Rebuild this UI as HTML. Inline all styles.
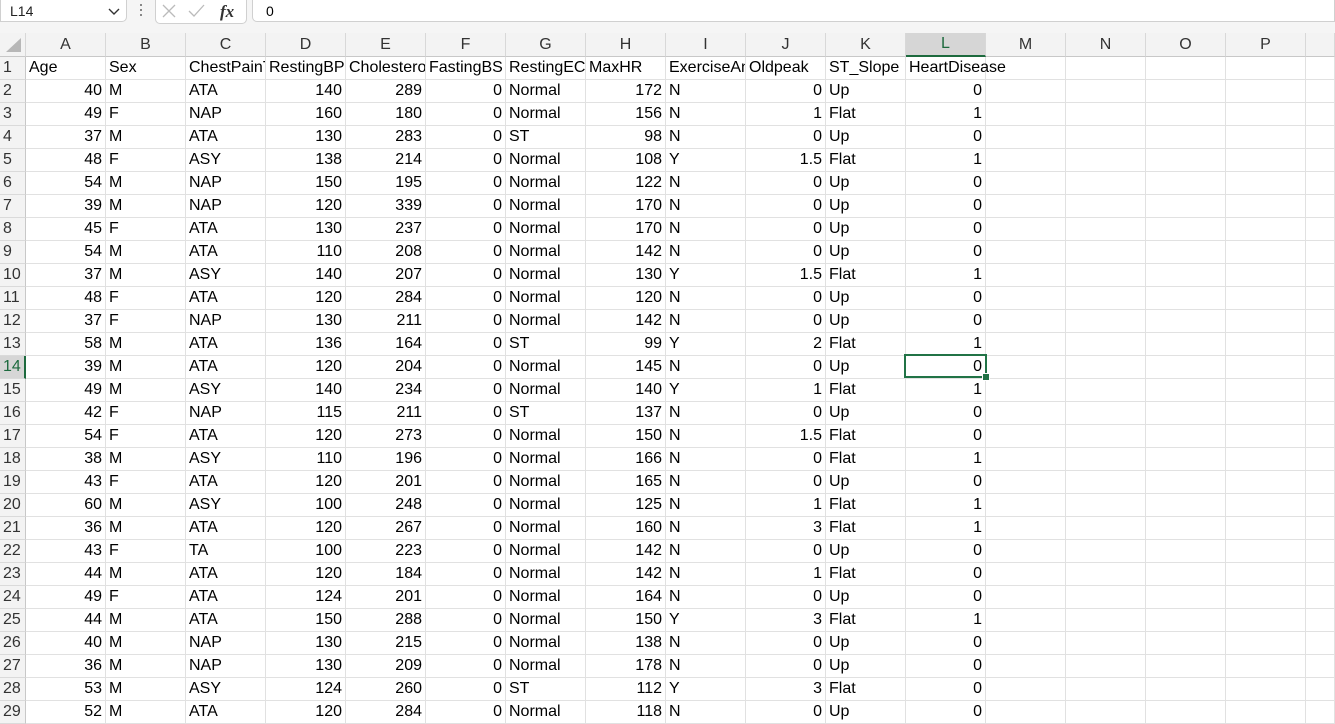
<!DOCTYPE html>
<html><head><meta charset="utf-8"><style>
body{margin:0;width:1335px;height:724px;overflow:hidden;background:#fff;font-family:"Liberation Sans",Arial,sans-serif;position:relative}
.top{position:absolute;left:0;top:0;width:1335px;height:33px;background:#f5f5f5}
.nb{position:absolute;left:0;top:-1px;width:127px;height:23px;background:#fff;border:1px solid #d0d0d0;border-radius:0 0 5px 0;font-size:14px;line-height:23px;padding-left:9px;box-sizing:border-box;color:#222}
.fx{position:absolute;left:155px;top:-1px;width:90px;height:23px;background:#fff;border:1px solid #d0d0d0;border-radius:0 0 5px 5px}
.fb{position:absolute;left:252px;top:-1px;width:1083px;height:23px;background:#fff;border:1px solid #d0d0d0;border-radius:0 0 0 5px;font-size:14px;line-height:22px;padding-left:13px;box-sizing:border-box}
table{position:absolute;left:0;top:33px;width:1335px;border-collapse:separate;border-spacing:0;table-layout:fixed;font-size:16px}
td{height:22px;border-right:1px solid #e1e1e1;border-bottom:1px solid #e1e1e1;padding:0 3px;white-space:nowrap;overflow:hidden;line-height:22px;color:#000;box-sizing:content-box}
td.r{text-align:right}
tr td:first-child{background:#f3f3f3;border-right:1px solid #c8c8c8;border-bottom:1px solid #dadada;padding:0 0 0 3px;color:#333;text-align:left}
tr.h td{background:#f3f3f3;text-align:center;color:#333;border-bottom:1px solid #c8c8c8;border-right:1px solid #d8d8d8}
tr.h td.sel{background:#d6d6d6;color:#1d6a3e;border-bottom:2px solid #1d6a3e;height:21px}
td.rs{background:#d6d6d6!important;color:#1d6a3e!important;border-right:2px solid #1d6a3e!important}
td.ov{overflow:visible;position:relative;z-index:2}
.selbox{position:absolute;left:904px;top:354px;width:79px;height:20px;border:2px solid #217346;z-index:3}
.handle{position:absolute;left:982px;top:373px;width:6px;height:6px;background:#217346;border:1px solid #fff;z-index:4}
</style></head><body>
<div class="top">
<div class="nb">L14<svg style="position:absolute;right:6px;top:8px" width="12" height="8"><path d="M1 1 L6 6 L11 1" fill="none" stroke="#333" stroke-width="1.4"/></svg></div>
<div style="position:absolute;left:140px;top:4px;width:2px;height:2px;background:#888;box-shadow:0 5px #888,0 10px #888"></div>
<div class="fx"><svg width="90" height="23"><path d="M7 5 L19 17 M19 5 L7 17" stroke="#bbb" stroke-width="1.3"/><path d="M33 11 L38 16 L48 5" fill="none" stroke="#bbb" stroke-width="1.3"/><text x="64" y="17" font-family="Liberation Serif" font-style="italic" font-weight="bold" font-size="17" fill="#333">fx</text></svg></div>
<div class="fb">0</div>
</div>
<table>
<colgroup><col style="width:26px"><col style="width:80px"><col style="width:80px"><col style="width:80px"><col style="width:80px"><col style="width:80px"><col style="width:80px"><col style="width:80px"><col style="width:80px"><col style="width:80px"><col style="width:80px"><col style="width:80px"><col style="width:80px"><col style="width:80px"><col style="width:80px"><col style="width:80px"><col style="width:80px"><col style="width:29px"></colgroup>
<tr class="h"><td style="background:#f3f3f3;padding:0"><svg style="display:block" width="26" height="22"><path d="M6 18 L21 18 L21 4 Z" fill="#b7b7b7"/></svg></td><td>A</td><td>B</td><td>C</td><td>D</td><td>E</td><td>F</td><td>G</td><td>H</td><td>I</td><td>J</td><td>K</td><td class="sel">L</td><td>M</td><td>N</td><td>O</td><td>P</td><td></td></tr>
<tr><td>1</td><td>Age</td><td>Sex</td><td>ChestPainType</td><td>RestingBP</td><td>Cholesterol</td><td>FastingBS</td><td>RestingECG</td><td>MaxHR</td><td>ExerciseAngina</td><td>Oldpeak</td><td>ST_Slope</td><td class="ov">HeartDisease</td><td></td><td></td><td></td><td></td><td></td></tr>
<tr><td>2</td><td class="r">40</td><td>M</td><td>ATA</td><td class="r">140</td><td class="r">289</td><td class="r">0</td><td>Normal</td><td class="r">172</td><td>N</td><td class="r">0</td><td>Up</td><td class="r">0</td><td></td><td></td><td></td><td></td><td></td></tr>
<tr><td>3</td><td class="r">49</td><td>F</td><td>NAP</td><td class="r">160</td><td class="r">180</td><td class="r">0</td><td>Normal</td><td class="r">156</td><td>N</td><td class="r">1</td><td>Flat</td><td class="r">1</td><td></td><td></td><td></td><td></td><td></td></tr>
<tr><td>4</td><td class="r">37</td><td>M</td><td>ATA</td><td class="r">130</td><td class="r">283</td><td class="r">0</td><td>ST</td><td class="r">98</td><td>N</td><td class="r">0</td><td>Up</td><td class="r">0</td><td></td><td></td><td></td><td></td><td></td></tr>
<tr><td>5</td><td class="r">48</td><td>F</td><td>ASY</td><td class="r">138</td><td class="r">214</td><td class="r">0</td><td>Normal</td><td class="r">108</td><td>Y</td><td class="r">1.5</td><td>Flat</td><td class="r">1</td><td></td><td></td><td></td><td></td><td></td></tr>
<tr><td>6</td><td class="r">54</td><td>M</td><td>NAP</td><td class="r">150</td><td class="r">195</td><td class="r">0</td><td>Normal</td><td class="r">122</td><td>N</td><td class="r">0</td><td>Up</td><td class="r">0</td><td></td><td></td><td></td><td></td><td></td></tr>
<tr><td>7</td><td class="r">39</td><td>M</td><td>NAP</td><td class="r">120</td><td class="r">339</td><td class="r">0</td><td>Normal</td><td class="r">170</td><td>N</td><td class="r">0</td><td>Up</td><td class="r">0</td><td></td><td></td><td></td><td></td><td></td></tr>
<tr><td>8</td><td class="r">45</td><td>F</td><td>ATA</td><td class="r">130</td><td class="r">237</td><td class="r">0</td><td>Normal</td><td class="r">170</td><td>N</td><td class="r">0</td><td>Up</td><td class="r">0</td><td></td><td></td><td></td><td></td><td></td></tr>
<tr><td>9</td><td class="r">54</td><td>M</td><td>ATA</td><td class="r">110</td><td class="r">208</td><td class="r">0</td><td>Normal</td><td class="r">142</td><td>N</td><td class="r">0</td><td>Up</td><td class="r">0</td><td></td><td></td><td></td><td></td><td></td></tr>
<tr><td>10</td><td class="r">37</td><td>M</td><td>ASY</td><td class="r">140</td><td class="r">207</td><td class="r">0</td><td>Normal</td><td class="r">130</td><td>Y</td><td class="r">1.5</td><td>Flat</td><td class="r">1</td><td></td><td></td><td></td><td></td><td></td></tr>
<tr><td>11</td><td class="r">48</td><td>F</td><td>ATA</td><td class="r">120</td><td class="r">284</td><td class="r">0</td><td>Normal</td><td class="r">120</td><td>N</td><td class="r">0</td><td>Up</td><td class="r">0</td><td></td><td></td><td></td><td></td><td></td></tr>
<tr><td>12</td><td class="r">37</td><td>F</td><td>NAP</td><td class="r">130</td><td class="r">211</td><td class="r">0</td><td>Normal</td><td class="r">142</td><td>N</td><td class="r">0</td><td>Up</td><td class="r">0</td><td></td><td></td><td></td><td></td><td></td></tr>
<tr><td>13</td><td class="r">58</td><td>M</td><td>ATA</td><td class="r">136</td><td class="r">164</td><td class="r">0</td><td>ST</td><td class="r">99</td><td>Y</td><td class="r">2</td><td>Flat</td><td class="r">1</td><td></td><td></td><td></td><td></td><td></td></tr>
<tr><td class="rs">14</td><td class="r">39</td><td>M</td><td>ATA</td><td class="r">120</td><td class="r">204</td><td class="r">0</td><td>Normal</td><td class="r">145</td><td>N</td><td class="r">0</td><td>Up</td><td class="r">0</td><td></td><td></td><td></td><td></td><td></td></tr>
<tr><td>15</td><td class="r">49</td><td>M</td><td>ASY</td><td class="r">140</td><td class="r">234</td><td class="r">0</td><td>Normal</td><td class="r">140</td><td>Y</td><td class="r">1</td><td>Flat</td><td class="r">1</td><td></td><td></td><td></td><td></td><td></td></tr>
<tr><td>16</td><td class="r">42</td><td>F</td><td>NAP</td><td class="r">115</td><td class="r">211</td><td class="r">0</td><td>ST</td><td class="r">137</td><td>N</td><td class="r">0</td><td>Up</td><td class="r">0</td><td></td><td></td><td></td><td></td><td></td></tr>
<tr><td>17</td><td class="r">54</td><td>F</td><td>ATA</td><td class="r">120</td><td class="r">273</td><td class="r">0</td><td>Normal</td><td class="r">150</td><td>N</td><td class="r">1.5</td><td>Flat</td><td class="r">0</td><td></td><td></td><td></td><td></td><td></td></tr>
<tr><td>18</td><td class="r">38</td><td>M</td><td>ASY</td><td class="r">110</td><td class="r">196</td><td class="r">0</td><td>Normal</td><td class="r">166</td><td>N</td><td class="r">0</td><td>Flat</td><td class="r">1</td><td></td><td></td><td></td><td></td><td></td></tr>
<tr><td>19</td><td class="r">43</td><td>F</td><td>ATA</td><td class="r">120</td><td class="r">201</td><td class="r">0</td><td>Normal</td><td class="r">165</td><td>N</td><td class="r">0</td><td>Up</td><td class="r">0</td><td></td><td></td><td></td><td></td><td></td></tr>
<tr><td>20</td><td class="r">60</td><td>M</td><td>ASY</td><td class="r">100</td><td class="r">248</td><td class="r">0</td><td>Normal</td><td class="r">125</td><td>N</td><td class="r">1</td><td>Flat</td><td class="r">1</td><td></td><td></td><td></td><td></td><td></td></tr>
<tr><td>21</td><td class="r">36</td><td>M</td><td>ATA</td><td class="r">120</td><td class="r">267</td><td class="r">0</td><td>Normal</td><td class="r">160</td><td>N</td><td class="r">3</td><td>Flat</td><td class="r">1</td><td></td><td></td><td></td><td></td><td></td></tr>
<tr><td>22</td><td class="r">43</td><td>F</td><td>TA</td><td class="r">100</td><td class="r">223</td><td class="r">0</td><td>Normal</td><td class="r">142</td><td>N</td><td class="r">0</td><td>Up</td><td class="r">0</td><td></td><td></td><td></td><td></td><td></td></tr>
<tr><td>23</td><td class="r">44</td><td>M</td><td>ATA</td><td class="r">120</td><td class="r">184</td><td class="r">0</td><td>Normal</td><td class="r">142</td><td>N</td><td class="r">1</td><td>Flat</td><td class="r">0</td><td></td><td></td><td></td><td></td><td></td></tr>
<tr><td>24</td><td class="r">49</td><td>F</td><td>ATA</td><td class="r">124</td><td class="r">201</td><td class="r">0</td><td>Normal</td><td class="r">164</td><td>N</td><td class="r">0</td><td>Up</td><td class="r">0</td><td></td><td></td><td></td><td></td><td></td></tr>
<tr><td>25</td><td class="r">44</td><td>M</td><td>ATA</td><td class="r">150</td><td class="r">288</td><td class="r">0</td><td>Normal</td><td class="r">150</td><td>Y</td><td class="r">3</td><td>Flat</td><td class="r">1</td><td></td><td></td><td></td><td></td><td></td></tr>
<tr><td>26</td><td class="r">40</td><td>M</td><td>NAP</td><td class="r">130</td><td class="r">215</td><td class="r">0</td><td>Normal</td><td class="r">138</td><td>N</td><td class="r">0</td><td>Up</td><td class="r">0</td><td></td><td></td><td></td><td></td><td></td></tr>
<tr><td>27</td><td class="r">36</td><td>M</td><td>NAP</td><td class="r">130</td><td class="r">209</td><td class="r">0</td><td>Normal</td><td class="r">178</td><td>N</td><td class="r">0</td><td>Up</td><td class="r">0</td><td></td><td></td><td></td><td></td><td></td></tr>
<tr><td>28</td><td class="r">53</td><td>M</td><td>ASY</td><td class="r">124</td><td class="r">260</td><td class="r">0</td><td>ST</td><td class="r">112</td><td>Y</td><td class="r">3</td><td>Flat</td><td class="r">0</td><td></td><td></td><td></td><td></td><td></td></tr>
<tr><td>29</td><td class="r">52</td><td>M</td><td>ATA</td><td class="r">120</td><td class="r">284</td><td class="r">0</td><td>Normal</td><td class="r">118</td><td>N</td><td class="r">0</td><td>Up</td><td class="r">0</td><td></td><td></td><td></td><td></td><td></td></tr>
</table>
<div class="selbox"></div><div class="handle"></div>
</body></html>
